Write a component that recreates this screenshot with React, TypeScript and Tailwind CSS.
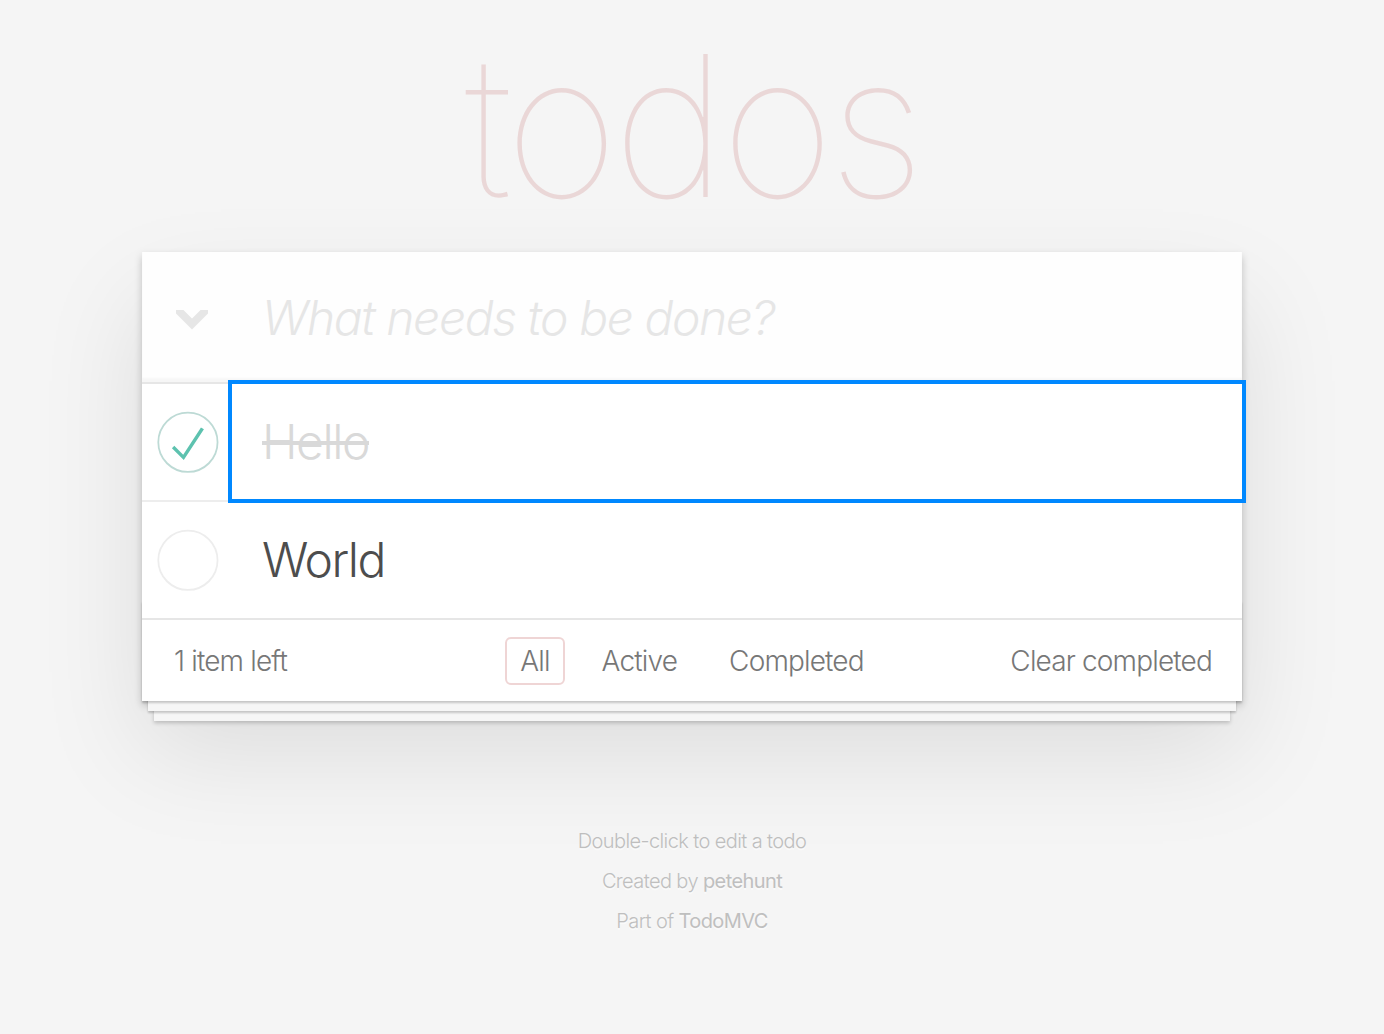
import { useState } from 'react';

interface Todo {
  id: number;
  title: string;
  completed: boolean;
}

type Filter = 'all' | 'active' | 'completed';

// 勾选框：圆圈 + 对勾（原版是一张背景 svg）
function ToggleIcon({ checked }: { checked: boolean }) {
  return (
    <svg width="80" height="80" viewBox="-10 -18 100 135" className="shrink-0">
      <circle cx="50" cy="50" r="50" fill="none" stroke={checked ? '#bddad5' : '#ededed'} strokeWidth="3" />
      {checked && <path fill="#5dc2af" d="M72 25L42 71 27 56l-4 4 20 20 34-52z" />}
    </svg>
  );
}

function TodoItem({ todo, focused, onToggle }: { todo: Todo; focused: boolean; onToggle: () => void }) {
  return (
    <li className="relative flex items-center border-b-2 border-[#ededed] last:border-b-0">
      <button onClick={onToggle} className="flex items-center">
        <ToggleIcon checked={todo.completed} />
      </button>
      <label
        className={`flex-1 pl-[40px] pr-[30px] py-[30px] text-[48px] leading-[56px] tracking-[-0.03em] break-all ${
          todo.completed ? 'text-[#d9d9d9] line-through' : 'text-[#4d4d4d]'
        }`}
      >
        {todo.title}
      </label>
      {focused && (
        <div className="pointer-events-none absolute left-[86px] -right-[4px] -top-[4px] -bottom-[3px] border-4 border-[#0088ff]" />
      )}
    </li>
  );
}

export default function App() {
  const [todos, setTodos] = useState<Todo[]>([
    { id: 1, title: 'Hello', completed: true },
    { id: 2, title: 'World', completed: false },
  ]);
  const [filter, setFilter] = useState<Filter>('all');
  const [text, setText] = useState('');

  const left = todos.filter(t => !t.completed).length;
  const shown = todos.filter(t =>
    filter === 'all' ? true : filter === 'active' ? !t.completed : t.completed
  );

  const toggle = (id: number) =>
    setTodos(prev => prev.map(t => (t.id === id ? { ...t, completed: !t.completed } : t)));

  const filters: { key: Filter; label: string }[] = [
    { key: 'all', label: 'All' },
    { key: 'active', label: 'Active' },
    { key: 'completed', label: 'Completed' },
  ];

  return (
    <div className="min-h-screen bg-[#f5f5f5] font-['Inter','Liberation_Sans',sans-serif] font-light text-[#4d4d4d] antialiased">
      <div className="w-[1100px] mx-auto">
        <h1 className="h-[252px] pt-[26px] text-center text-[196px] leading-[200px] tracking-[-0.03em] font-thin text-[rgba(175,47,47,0.15)]">
          todos
        </h1>

        <section className="relative bg-white shadow-[0_4px_8px_0_rgba(0,0,0,0.2),0_50px_100px_0_rgba(0,0,0,0.1)]">
          <header className="relative">
            {/* 全选箭头 ❯ 旋转 90° */}
            <svg width="32" height="22" viewBox="0 0 32 22" className="absolute left-[34px] top-[57px]">
              <polygon points="0,1 7.5,1 16,9.5 24.5,1 32,1 32,4.5 16,20.5 0,4.5" fill="#e6e6e6" />
            </svg>
            <input
              value={text}
              onChange={e => setText(e.target.value)}
              placeholder="What needs to be done?"
              className="block w-full h-[130px] pl-[120px] pr-[32px] text-[48px] tracking-[-0.03em] bg-[rgba(0,0,0,0.003)] shadow-[inset_0_-4px_2px_rgba(0,0,0,0.03)] outline-none placeholder:italic placeholder:font-light placeholder:text-[#e6e6e6]"
            />
          </header>

          <ul className="border-t-2 border-[#e6e6e6]">
            {shown.map(t => (
              <TodoItem key={t.id} todo={t} focused={t.id === 1} onToggle={() => toggle(t.id)} />
            ))}
          </ul>

          <footer className="relative grid grid-cols-[1fr_auto_1fr] items-center h-[83px] px-[30px] border-t-2 border-[#e6e6e6] text-[28px] tracking-[-0.03em] text-[#777]">
            <div className="pointer-events-none absolute inset-x-0 bottom-0 h-[100px] shadow-[0_2px_2px_rgba(0,0,0,0.2),0_16px_0_-6px_#f6f6f6,0_18px_2px_-6px_rgba(0,0,0,0.2),0_32px_0_-12px_#f6f6f6,0_34px_4px_-12px_rgba(0,0,0,0.2)]" />
            <span className="relative text-left pl-[2px]">
              {left} {left === 1 ? 'item' : 'items'} left
            </span>
            <ul className="relative flex items-center gap-[22px]">
              {filters.map(f => (
                <li key={f.key}>
                  <a
                    href={`#/${f.key === 'all' ? '' : f.key}`}
                    onClick={e => {
                      e.preventDefault();
                      setFilter(f.key);
                    }}
                    className={`block h-[48px] px-[13px] leading-[44px] border-2 rounded-[6px] ${
                      filter === f.key ? 'border-[rgba(175,47,47,0.2)]' : 'border-transparent hover:border-[rgba(175,47,47,0.1)]'
                    }`}
                  >
                    {f.label}
                  </a>
                </li>
              ))}
            </ul>
            <button
              onClick={() => setTodos(prev => prev.filter(t => !t.completed))}
              className="relative justify-self-end font-light tracking-[-0.03em]"
            >
              Clear completed
            </button>
          </footer>
        </section>

        <footer className="mt-[130px] text-center text-[20px] leading-none tracking-[-0.03em] text-[#bfbfbf] [text-shadow:0_2px_0_rgba(255,255,255,0.5)]">
          <p>Double-click to edit a todo</p>
          <p className="mt-[20px]">
            Created by <a href="#" className="font-normal">petehunt</a>
          </p>
          <p className="mt-[20px]">
            Part of <a href="#" className="font-normal">TodoMVC</a>
          </p>
        </footer>
      </div>
    </div>
  );
}
